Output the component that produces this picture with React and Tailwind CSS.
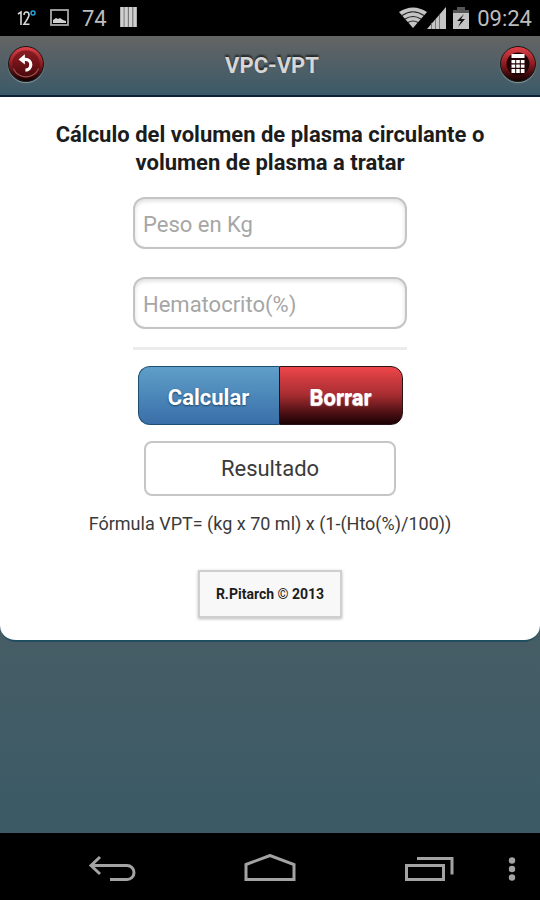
import React, { useState } from 'react';

function StatusBar() {
    return (
        <div className="h-9 shrink-0 bg-black text-[#bdbdbd] flex items-center justify-between pl-4 pr-2">
            <div className="flex items-center">
                <svg className="w-5 h-5" viewBox="0 0 20 20" aria-hidden="true">
                    <path d="M2 6l3-2v13M8 7q0-3 2.500-3t2.500 3q0 2-5 9.200h5.500" fill="none" stroke="#d8d8d8" strokeWidth="1.600" />
                    <circle cx="17" cy="5" r="2" fill="none" stroke="#2a9fd8" strokeWidth="1.500" />
                </svg>
                <svg className="w-5 h-5 ml-3.5" viewBox="0 0 20 20" aria-hidden="true">
                    <rect x="1" y="2" width="17" height="15" fill="none" stroke="#a8a8a8" strokeWidth="1.800" />
                    <path d="M3 15v-3l3-2 2 1 2-1 3 2 3 1v2z" fill="#d0d0d0" />
                </svg>
                <span className="ml-3 pt-0.5 text-[22px] leading-8">74</span>
                <svg className="w-5 h-6 ml-3" viewBox="0 0 20 24" aria-hidden="true">
                    <rect x="1" y="1" width="17" height="20" fill="#777" />
                    <path d="M3 1v20M7.200 1v20M11.600 1v20M16 1v20" stroke="#d0d0d0" strokeWidth="3.200" />
                </svg>
            </div>
            <div className="flex items-center">
                <svg className="w-7 h-6" viewBox="0 0 28 24" aria-hidden="true">
                    <path d="M0 6Q14-3 28 6L14 22z" fill="#c4c4c4" />
                    <path d="M3 9.500q11-7.500 22 0M6 13q8-5 16 0M9 16.500q5-3 10 0" fill="none" stroke="#222" strokeWidth="1.200" />
                </svg>
                <svg className="w-5 h-6" viewBox="0 0 20 24" aria-hidden="true">
                    <path d="M0 23L19 1v22z" fill="#c4c4c4" />
                    <path d="M4.500 17v6M8.500 13v10M12.500 9v14" stroke="#777" strokeWidth="1" />
                </svg>
                <svg className="w-4 h-6 ml-1.5" viewBox="0 0 16 24" aria-hidden="true">
                    <path d="M4 1h8v3h4v6H0V4h4z" fill="#555" />
                    <path d="M0 7h16v16H0z" fill="#c4c4c4" />
                    <path d="M11 8L4 15h4l-3 6 7-8H8z" fill="#111" />
                </svg>
                <span className="ml-2 pt-0.5 text-[22px] leading-8">09:24</span>
            </div>
        </div>
    );
}

function RoundButton({ label, children }) {
    return (
        <button
            type="button"
            aria-label={label}
            className="w-9 h-9 rounded-full border border-[#171717] bg-linear-to-b from-[#e04048] via-[#8e1c22] to-[#140202] flex items-center justify-center shadow-[0_1px_1px_#8a9a9e]"
        >
            {children}
        </button>
    );
}

function Header() {
    return (
        <header className="h-[61px] shrink-0 flex items-center justify-between pl-2 pr-1 pb-1 border-b-2 border-[#0c2036] bg-linear-to-b from-[#646464] to-[#3a5a68]">
            <RoundButton label="Volver">
                <svg className="w-8 h-8" viewBox="0 0 28 28" aria-hidden="true">
                    <circle cx="14" cy="14" r="12" fill="#5a0d10" fillOpacity="0.600" />
                    <path d="M3 18a12 12 0 0 0 22 0" fill="none" stroke="#a05050" strokeWidth="1" />
                    <path d="M12 10h1.500a4.700 4.700 0 0 1 0 9.400" fill="none" stroke="#fff" strokeWidth="2.800" />
                    <path d="M7.500 10L13 5.500v9z" fill="#fff" />
                </svg>
            </RoundButton>
            <h1 className="pt-1 text-[22px] leading-7 font-bold text-[#d6d6d6] [text-shadow:0_-2px_2px_#222]">VPC-VPT</h1>
            <RoundButton label="Calculadora">
                <svg className="w-7 h-7" viewBox="0 0 28 28" aria-hidden="true">
                    <circle cx="14" cy="14" r="11.500" fill="#220305" />
                    <path d="M7.500 4h13v4h-13zM7.500 10h3.700v3.300H7.500zM12.200 10h3.600v3.300h-3.600zM16.800 10h3.700v3.300h-3.700zM7.500 14.500h3.700v3.300H7.500zM12.200 14.500h3.600v3.300h-3.600zM16.800 14.500h3.700v3.300h-3.700zM7.500 19h3.700v4H7.500zM12.200 19h3.600v4h-3.600zM16.800 19h3.700v4h-3.700z" fill="#fff" />
                </svg>
            </RoundButton>
        </header>
    );
}

function Field({ label, value, onChange }) {
    return (
        <input
            type="text"
            inputMode="decimal"
            aria-label={label}
            placeholder={label}
            value={value}
            onChange={(e) => onChange(e.target.value)}
            className="w-full h-[52px] px-2 pt-0.5 rounded-xl border-2 border-[#c4c4c4] bg-white text-[22px] text-[#333] placeholder:text-[#a6a6a6] shadow-[inset_0_2px_4px_#ddd] outline-none"
        />
    );
}

function NavBar() {
    return (
        <nav className="h-[67px] shrink-0 bg-black flex items-center justify-between pt-1.5 pl-[88px] pr-5">
            <button type="button" aria-label="Atrás">
                <svg className="w-12 h-8" viewBox="0 0 48 32" fill="none" stroke="#a3a3a3" strokeWidth="3" aria-hidden="true">
                    <path d="M3 11.500h36a7 7 0 0 1 0 14H22M12 3L3 11.500 12 20" />
                </svg>
            </button>
            <button type="button" aria-label="Inicio">
                <svg className="w-14 h-8" viewBox="0 0 56 32" fill="none" stroke="#a3a3a3" strokeWidth="3" aria-hidden="true">
                    <path d="M4 10.500L28 1.500l24 9v15H4z" />
                </svg>
            </button>
            <div className="flex items-center gap-12">
                <button type="button" aria-label="Recientes">
                    <svg className="w-13 h-8" viewBox="0 0 52 32" fill="none" stroke="#a3a3a3" strokeWidth="3" aria-hidden="true">
                        <path d="M2.500 11.500h37v14h-37zM13 4.500h35v16" />
                    </svg>
                </button>
                <button type="button" aria-label="Más opciones">
                    <svg className="w-4 h-8" viewBox="0 0 16 32" fill="#a3a3a3" aria-hidden="true">
                        <circle cx="8" cy="6.500" r="3.200" />
                        <circle cx="8" cy="15" r="3.200" />
                        <circle cx="8" cy="23.500" r="3.200" />
                    </svg>
                </button>
            </div>
        </nav>
    );
}

export default function App() {
    const [weight, setWeight] = useState('');
    const [hematocrit, setHematocrit] = useState('');
    const [result, setResult] = useState('');

    const calculate = () => {
        const kg = parseFloat(weight);
        const hto = parseFloat(hematocrit);
        if (Number.isNaN(kg) || Number.isNaN(hto)) return;
        setResult(`${Math.round(kg * 70 * (1 - hto / 100))} ml`);
    };

    const clear = () => {
        setWeight('');
        setHematocrit('');
        setResult('');
    };

    return (
        <div className="min-h-screen flex flex-col bg-[#3a5a66] font-[Roboto,sans-serif]">
            <StatusBar />
            <Header />
            <main className="grow bg-linear-to-b from-[#646464] to-[#3a5a66]">
                <div className="bg-white rounded-b-2xl border-b-2 border-[#1f4e60] flex flex-col items-center pt-6 pb-[22px]">
                    <h2 className="px-10 text-center text-[22px] leading-7 font-bold text-[#1c1c1c]">
                        Cálculo del volumen de plasma circulante o volumen de plasma a tratar
                    </h2>

                    <div className="w-[274px] mt-5 flex flex-col gap-7">
                        <Field label="Peso en Kg" value={weight} onChange={setWeight} />
                        <Field label="Hematocrito(%)" value={hematocrit} onChange={setHematocrit} />
                    </div>
                    <hr className="w-[274px] mt-[18px] border-t-3 border-[#ececec]" />

                    <div className="mt-4 h-[59px] w-[265px] flex text-[22px] font-bold text-white">
                        <button
                            type="button"
                            onClick={calculate}
                            className="w-[141px] pt-1 rounded-l-xl border border-r-0 border-[#1d4f75] bg-linear-to-b from-[#5f9fc9] to-[#396fa8] [text-shadow:0_1px_2px_#1b4468]"
                        >
                            Calcular
                        </button>
                        <button
                            type="button"
                            onClick={clear}
                            className="grow pt-1 rounded-r-xl border border-[#2a1418] bg-linear-to-b from-[#ee464a] via-[#a52c30] to-[#1c0305] [text-shadow:0_1px_1px_#fff]"
                        >
                            Borrar
                        </button>
                    </div>

                    <input
                        type="text"
                        readOnly
                        aria-label="Resultado"
                        placeholder="Resultado"
                        value={result}
                        className="mt-4 w-[252px] h-[55px] rounded-lg border-2 border-[#c6c6c6] bg-white text-center text-[22px] text-[#3a3a3a] placeholder:text-[#3a3a3a] outline-none"
                    />

                    <p className="mt-[14px] text-lg leading-7 text-[#3a3a3a]">Fórmula VPT= (kg x 70 ml) x (1-(Hto(%)/100))</p>

                    <footer className="mt-8 px-4 py-3 border-2 border-[#cfcfcf] bg-[#f8f8f8] text-sm leading-5 font-bold text-[#1c1c1c] shadow-[0_1px_3px_#bbb]">
                        R.Pitarch <span className="font-normal">©</span> 2013
                    </footer>
                </div>
            </main>
            <NavBar />
        </div>
    );
}
